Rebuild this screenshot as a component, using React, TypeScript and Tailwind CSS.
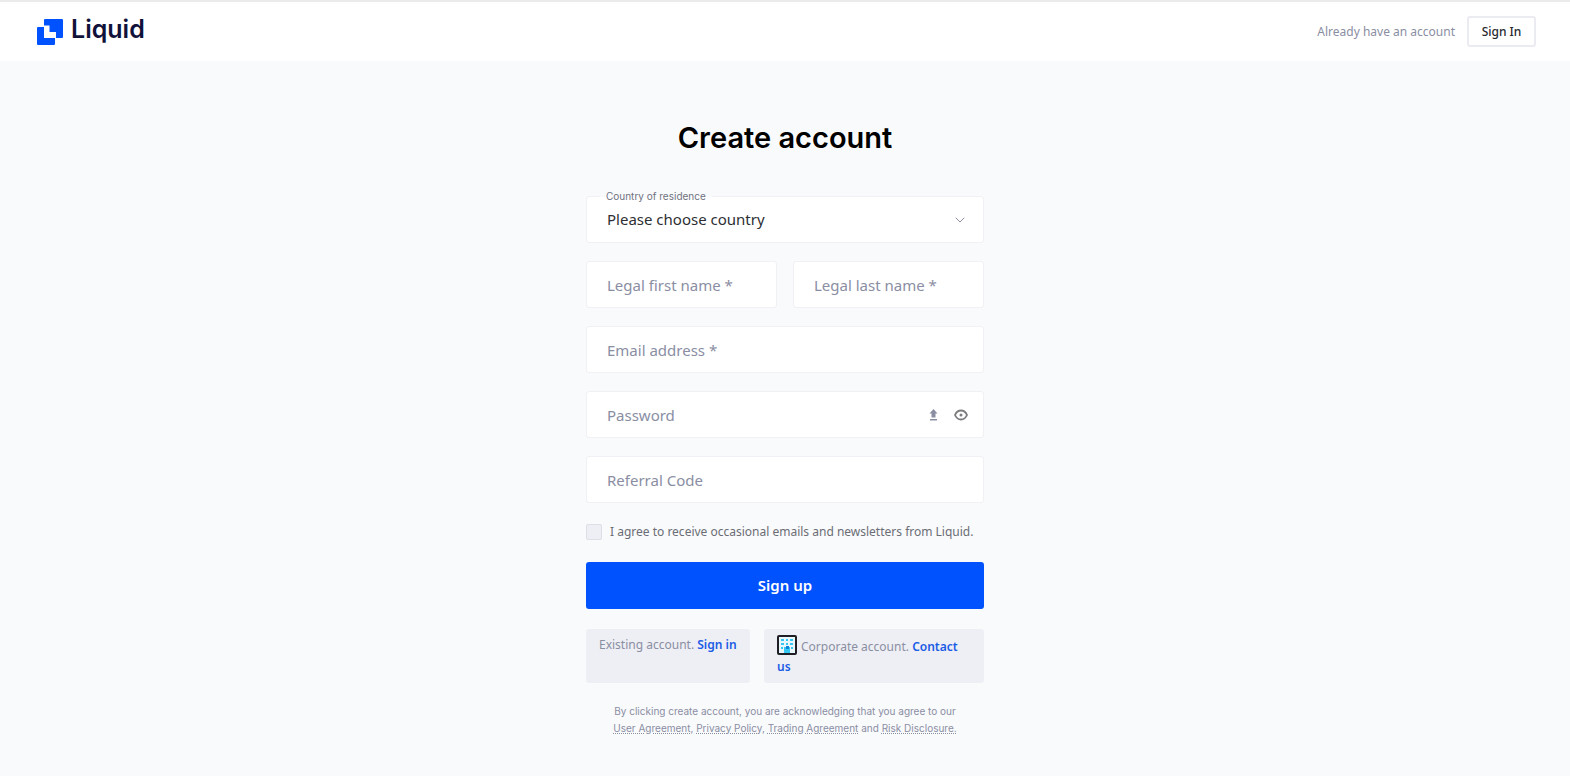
import { useState } from "react";
import type { InputHTMLAttributes } from "react";
import { ChevronDown } from "lucide-react";
import clsx from "clsx";

function LogoMark() {
  return (
    <svg width="26" height="26" viewBox="0 0 26 26" fill="#0052ff" aria-hidden="true">
      <path d="M8 0h17a1 1 0 0 1 1 1v17a1 1 0 0 1-1 1h-6v-6h-6.500V6.500H7V1a1 1 0 0 1 1-1z" />
      <path d="M1 8h6v11h11v6a1 1 0 0 1-1 1H1a1 1 0 0 1-1-1V9a1 1 0 0 1 1-1z" />
    </svg>
  );
}

function CapsIcon() {
  return (
    <svg width="9" height="12" viewBox="0 0 9 12" fill="#8a8ea3" aria-hidden="true">
      <path d="M4.500 0 8.500 4.500H6.500V8.500H2.500V4.500H.5z" />
      <path d="M1 10h7v1.500H1z" />
    </svg>
  );
}

function EyeIcon() {
  return (
    <svg width="14" height="12" viewBox="0 0 14 12" fill="none" stroke="#7b7b80" strokeWidth="1.800" aria-hidden="true">
      <path d="M1 6C2.300 3 4.400 1.500 7 1.500S11.700 3 13 6c-1.300 3-3.400 4.500-6 4.500S2.300 9 1 6z" />
      <circle cx="7" cy="6" r="1.500" fill="#7b7b80" stroke="none" />
    </svg>
  );
}

function BuildingIcon() {
  return (
    <svg className="mr-1 inline-block align-[-4px]" width="20" height="20" viewBox="0 0 20 20" aria-hidden="true">
      <rect x="1" y="1" width="18" height="18" rx="1" fill="#e9f6fc" stroke="#1d1f24" strokeWidth="2" />
      <g fill="#35c8f5">
        <path d="M4 4h3v2H4zM9 4h2v2H9zM13 4h3v2h-3z" />
        <path d="M4 8h3v2H4zM9 8h2v2H9zM13 8h3v2h-3z" />
        <path d="M4 12h2v2H4zM14 12h2v2h-2z" />
        <path d="M7 12h6v6H7z" />
      </g>
      <path d="M9 11h3v3H9z" fill="#0c84d8" />
    </svg>
  );
}

const fieldClass =
  "block h-[47px] w-full rounded-[3px] border border-[#f0f0f5] bg-white px-5 text-[15px] text-[#2d2f33] placeholder:text-[#8a8ea3] placeholder:opacity-100 focus:outline-none focus:border-[#0052ff]";

function Field({ label, className, ...rest }: { label: string } & InputHTMLAttributes<HTMLInputElement>) {
  return <input aria-label={label} placeholder={label} className={clsx(fieldClass, className)} {...rest} />;
}

const termsLink = "underline decoration-dotted underline-offset-1";

export default function App() {
  const [showPassword, setShowPassword] = useState(false);

  return (
    <div className="min-h-screen bg-[#f9fafc] font-['Noto_Sans',sans-serif]">
      <header className="flex h-[61px] items-center justify-between border-t-2 border-[#ebebeb] bg-white pr-[34px] pl-[37px]">
        <a href="#" className="flex items-start gap-2">
          <LogoMark />
          <span className="font-['Inter',sans-serif] text-[25px] leading-5 font-semibold text-[#10123a]">Liquid</span>
        </a>
        <div className="flex items-center gap-3">
          <span className="text-xs text-[#8a8ea3]">Already have an account</span>
          <button className="h-[31px] w-[69px] rounded-[3px] border-2 border-[#ebecf1] bg-white text-xs font-medium text-[#26282c]">
            Sign In
          </button>
        </div>
      </header>

      <main className="mx-auto w-full max-w-[398px] pt-[59px] pb-10">
        <h1 className="text-center font-['Inter',sans-serif] text-[29px] leading-9 font-semibold text-black">
          Create account
        </h1>

        <form className="mt-10" onSubmit={(e) => e.preventDefault()}>
          <div className="flex flex-col gap-[18px]">
            <div className="relative">
              <label
                htmlFor="country"
                className="absolute -top-2 left-3.5 bg-linear-to-b from-[#f9fafc] from-55% to-white to-55% px-1.5 font-['Inter',sans-serif] text-[10px] leading-4 text-[#6f7280]"
              >
                Country of residence
              </label>
              <select id="country" className={clsx(fieldClass, "appearance-none")}>
                <option>Please choose country</option>
              </select>
              <ChevronDown
                className="pointer-events-none absolute top-4 right-4 size-4 text-[#8a8ea3]"
                strokeWidth={1.5}
              />
            </div>
            <div className="grid grid-cols-2 gap-4">
              <Field label="Legal first name *" />
              <Field label="Legal last name *" />
            </div>
            <Field label="Email address *" type="email" />
            <div className="relative">
              <Field label="Password" type={showPassword ? "text" : "password"} className="pr-16" />
              <div className="absolute inset-y-0 right-4 flex items-center gap-4">
                <CapsIcon />
                <button type="button" aria-label="Show password" onClick={() => setShowPassword(!showPassword)}>
                  <EyeIcon />
                </button>
              </div>
            </div>
            <Field label="Referral Code" />
          </div>

          <label className="mt-[19px] flex items-center gap-2 text-xs leading-5 text-[#6b6d75]">
            <input
              type="checkbox"
              className="size-4 shrink-0 appearance-none rounded-xs border border-[#dddee6] bg-[#eeeff4] checked:bg-[#0052ff]"
            />
            I agree to receive occasional emails and newsletters from Liquid.
          </label>

          <button className="mt-5 h-[47px] w-full rounded-[3px] bg-[#0052ff] text-[15px] font-semibold text-white">
            Sign up
          </button>
        </form>

        <div className="mt-5 flex gap-3.5 text-xs leading-5 text-[#8a8ea3]">
          <div className="w-[164px] shrink-0 rounded-[3px] bg-[#eeeff4] px-[13px] py-1.5">
            Existing account.{" "}
            <a href="#" className="font-semibold text-[#1a5ce6]">
              Sign in
            </a>
          </div>
          <div className="flex-1 rounded-[3px] bg-[#eeeff4] px-[13px] py-1.5">
            <BuildingIcon />
            Corporate account.{" "}
            <a href="#" className="font-semibold text-[#1a5ce6]">
              Contact us
            </a>
          </div>
        </div>

        <p className="mt-5 text-center font-['Inter',sans-serif] text-[10px] leading-[17px] text-[#8a8ea3]">
          By clicking create account, you are acknowledging that you agree to our
          <br />
          <a href="#" className={termsLink}>User Agreement</a>, <a href="#" className={termsLink}>Privacy Policy</a>,{" "}
          <a href="#" className={termsLink}>Trading Agreement</a> and{" "}
          <a href="#" className={termsLink}>Risk Disclosure.</a>
        </p>
      </main>
    </div>
  );
}
